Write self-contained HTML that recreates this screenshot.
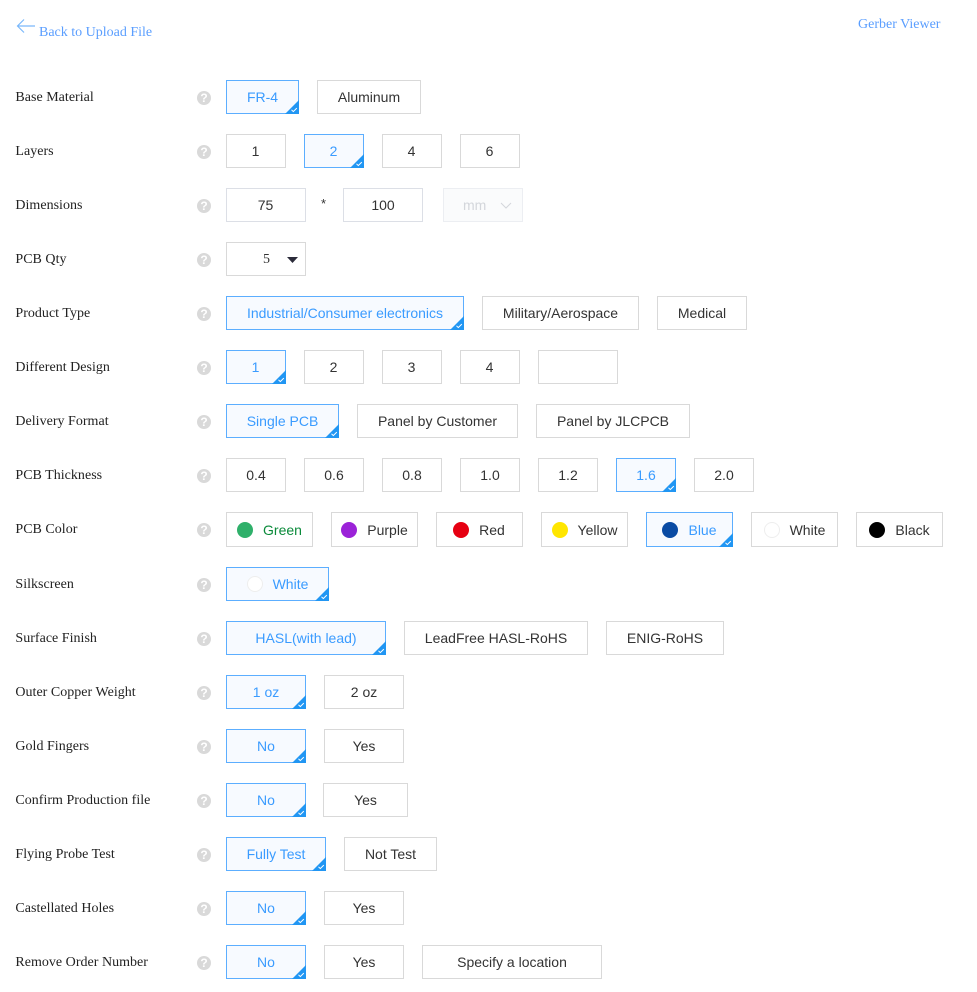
<!DOCTYPE html>
<html>
<head>
<meta charset="utf-8">
<style>
html,body{margin:0;padding:0;background:#fff;width:977px;height:992px;overflow:hidden}
body{position:relative;font-family:"Liberation Sans",sans-serif;font-size:14px;color:#333}
.r{position:absolute;left:0;width:977px;height:34px}
.l{position:absolute;left:15.4px;top:9px;font:14px/18px "Liberation Serif",serif;color:#222;white-space:nowrap;letter-spacing:.02px}
.q{position:absolute;left:197px;top:11px;width:14px;height:14px;border-radius:50%;background:#d9d9d9;color:#fff;font:bold 12px/14px "Liberation Sans",sans-serif;text-align:center}
.b{position:absolute;top:0;height:32px;border:1px solid #d9d9d9;box-sizing:content-box;line-height:33px;text-align:center;color:#333;background:#fff;white-space:nowrap}
.s{border-color:#5caeff;background:#f7faff;color:#3a9bff}
.s svg{position:absolute;right:-1px;bottom:-1px;width:14px;height:14px}
.n{text-indent:-1px}
.c .b{height:33px;line-height:35px}
.d{display:inline-block;width:16px;height:16px;border-radius:50%;vertical-align:-3px;margin-right:10px;box-sizing:border-box}
.a{position:absolute;font:14px/18px "Liberation Serif",serif;color:#5a9eff;white-space:nowrap}
</style>
</head>
<body>
<svg style="position:absolute;left:16px;top:18px" width="20" height="16" viewBox="0 0 20 16"><path d="M19 8H1.5M8 1.5L1.5 8 8 14.5" fill="none" stroke="#7ab8fb" stroke-width="1.2"/></svg>
<a class="a" style="left:39px;top:24px">Back to Upload File</a>
<a class="a" style="left:858px;top:16px">Gerber Viewer</a>

<div class="r" style="top:80px"><span class="l">Base Material</span><span class="q">?</span>
<div class="b s" style="left:226px;width:71px">FR-4<svg viewBox="0 0 14 14"><path d="M14 0V14H0Z" fill="#2196f3"/><path d="M6.5 9.8L8.3 11.6 11.8 8.1" fill="none" stroke="#fff"/></svg></div>
<div class="b" style="left:317px;width:102px">Aluminum</div></div>

<div class="r" style="top:134px"><span class="l">Layers</span><span class="q">?</span>
<div class="b n" style="left:226px;width:58px">1</div>
<div class="b s n" style="left:304px;width:58px">2<svg viewBox="0 0 14 14"><path d="M14 0V14H0Z" fill="#2196f3"/><path d="M6.5 9.8L8.3 11.6 11.8 8.1" fill="none" stroke="#fff"/></svg></div>
<div class="b n" style="left:382px;width:58px">4</div>
<div class="b n" style="left:460px;width:58px">6</div></div>

<div class="r" style="top:188px"><span class="l">Dimensions</span><span class="q">?</span>
<div class="b n" style="left:226px;width:78px;border-color:#dcdfe6">75</div>
<span style="position:absolute;left:321px;top:7px;line-height:18px;font-size:13px">*</span>
<div class="b" style="left:343px;width:78px;border-color:#dcdfe6">100</div>
<div class="b" style="left:443px;width:78px;border-color:#eceef2;background:#fafbfc;color:#d3d6db;text-align:left;text-indent:19px">mm<svg style="position:absolute;left:56px;top:13px" width="12" height="8" viewBox="0 0 12 8"><path d="M1 1L6 6 11 1" fill="none" stroke="#d3d6db"/></svg></div></div>

<div class="r" style="top:242px"><span class="l">PCB Qty</span><span class="q">?</span>
<div class="b" style="left:226px;width:78px;font-family:'Liberation Serif',serif;text-align:left;text-indent:36px">5<svg style="position:absolute;left:60px;top:14px" width="11" height="6" viewBox="0 0 11 6"><path d="M0 0H11L5.5 6Z" fill="#2b2b3a"/></svg></div></div>

<div class="r" style="top:296px"><span class="l">Product Type</span><span class="q">?</span>
<div class="b s" style="left:226px;width:236px">Industrial/Consumer electronics<svg viewBox="0 0 14 14"><path d="M14 0V14H0Z" fill="#2196f3"/><path d="M6.5 9.8L8.3 11.6 11.8 8.1" fill="none" stroke="#fff"/></svg></div>
<div class="b" style="left:482px;width:155px">Military/Aerospace</div>
<div class="b" style="left:657px;width:88px">Medical</div></div>

<div class="r" style="top:350px"><span class="l">Different Design</span><span class="q">?</span>
<div class="b s n" style="left:226px;width:58px">1<svg viewBox="0 0 14 14"><path d="M14 0V14H0Z" fill="#2196f3"/><path d="M6.5 9.8L8.3 11.6 11.8 8.1" fill="none" stroke="#fff"/></svg></div>
<div class="b n" style="left:304px;width:58px">2</div>
<div class="b n" style="left:382px;width:58px">3</div>
<div class="b n" style="left:460px;width:58px">4</div>
<div class="b" style="left:538px;width:78px"></div></div>

<div class="r" style="top:404px"><span class="l">Delivery Format</span><span class="q">?</span>
<div class="b s" style="left:226px;width:111px">Single PCB<svg viewBox="0 0 14 14"><path d="M14 0V14H0Z" fill="#2196f3"/><path d="M6.5 9.8L8.3 11.6 11.8 8.1" fill="none" stroke="#fff"/></svg></div>
<div class="b" style="left:357px;width:159px">Panel by Customer</div>
<div class="b" style="left:536px;width:152px">Panel by JLCPCB</div></div>

<div class="r" style="top:458px"><span class="l">PCB Thickness</span><span class="q">?</span>
<div class="b" style="left:226px;width:58px">0.4</div>
<div class="b" style="left:304px;width:58px">0.6</div>
<div class="b" style="left:382px;width:58px">0.8</div>
<div class="b" style="left:460px;width:58px">1.0</div>
<div class="b" style="left:538px;width:58px">1.2</div>
<div class="b s" style="left:616px;width:58px">1.6<svg viewBox="0 0 14 14"><path d="M14 0V14H0Z" fill="#2196f3"/><path d="M6.5 9.8L8.3 11.6 11.8 8.1" fill="none" stroke="#fff"/></svg></div>
<div class="b" style="left:694px;width:58px">2.0</div></div>

<div class="r c" style="top:512px"><span class="l">PCB Color</span><span class="q">?</span>
<div class="b" style="left:226px;width:85px;color:#0a8a3a"><i class="d" style="background:#2fb06a"></i>Green</div>
<div class="b" style="left:331px;width:85px"><i class="d" style="background:#9b22d8"></i>Purple</div>
<div class="b" style="left:436px;width:85px"><i class="d" style="background:#e60012;margin-left:-1px"></i>Red</div>
<div class="b" style="left:541px;width:85px"><i class="d" style="background:#ffe600"></i>Yellow</div>
<div class="b s" style="left:646px;width:85px"><i class="d" style="background:#0a4ba3"></i>Blue<svg viewBox="0 0 14 14"><path d="M14 0V14H0Z" fill="#2196f3"/><path d="M6.5 9.8L8.3 11.6 11.8 8.1" fill="none" stroke="#fff"/></svg></div>
<div class="b" style="left:751px;width:85px"><i class="d" style="background:#fff;border:1px solid #eee"></i>White</div>
<div class="b" style="left:856px;width:85px"><i class="d" style="background:#000"></i>Black</div></div>

<div class="r" style="top:567px"><span class="l">Silkscreen</span><span class="q">?</span>
<div class="b s" style="left:226px;width:101px"><i class="d" style="background:#fff;border:1px solid #eee"></i>White<svg viewBox="0 0 14 14"><path d="M14 0V14H0Z" fill="#2196f3"/><path d="M6.5 9.8L8.3 11.6 11.8 8.1" fill="none" stroke="#fff"/></svg></div></div>

<div class="r" style="top:621px"><span class="l">Surface Finish</span><span class="q">?</span>
<div class="b s" style="left:226px;width:158px">HASL(with lead)<svg viewBox="0 0 14 14"><path d="M14 0V14H0Z" fill="#2196f3"/><path d="M6.5 9.8L8.3 11.6 11.8 8.1" fill="none" stroke="#fff"/></svg></div>
<div class="b" style="left:404px;width:182px">LeadFree HASL-RoHS</div>
<div class="b" style="left:606px;width:116px">ENIG-RoHS</div></div>

<div class="r" style="top:675px"><span class="l">Outer Copper Weight</span><span class="q">?</span>
<div class="b s" style="left:226px;width:78px">1 oz<svg viewBox="0 0 14 14"><path d="M14 0V14H0Z" fill="#2196f3"/><path d="M6.5 9.8L8.3 11.6 11.8 8.1" fill="none" stroke="#fff"/></svg></div>
<div class="b" style="left:324px;width:78px">2 oz</div></div>

<div class="r" style="top:729px"><span class="l">Gold Fingers</span><span class="q">?</span>
<div class="b s" style="left:226px;width:78px">No<svg viewBox="0 0 14 14"><path d="M14 0V14H0Z" fill="#2196f3"/><path d="M6.5 9.8L8.3 11.6 11.8 8.1" fill="none" stroke="#fff"/></svg></div>
<div class="b" style="left:324px;width:78px">Yes</div></div>

<div class="r" style="top:783px"><span class="l">Confirm Production file</span><span class="q">?</span>
<div class="b s" style="left:226px;width:78px">No<svg viewBox="0 0 14 14"><path d="M14 0V14H0Z" fill="#2196f3"/><path d="M6.5 9.8L8.3 11.6 11.8 8.1" fill="none" stroke="#fff"/></svg></div>
<div class="b" style="left:323px;width:83px">Yes</div></div>

<div class="r" style="top:837px"><span class="l">Flying Probe Test</span><span class="q">?</span>
<div class="b s" style="left:226px;width:98px">Fully Test<svg viewBox="0 0 14 14"><path d="M14 0V14H0Z" fill="#2196f3"/><path d="M6.5 9.8L8.3 11.6 11.8 8.1" fill="none" stroke="#fff"/></svg></div>
<div class="b" style="left:344px;width:91px">Not Test</div></div>

<div class="r" style="top:891px"><span class="l">Castellated Holes</span><span class="q">?</span>
<div class="b s" style="left:226px;width:78px">No<svg viewBox="0 0 14 14"><path d="M14 0V14H0Z" fill="#2196f3"/><path d="M6.5 9.8L8.3 11.6 11.8 8.1" fill="none" stroke="#fff"/></svg></div>
<div class="b" style="left:324px;width:78px">Yes</div></div>

<div class="r" style="top:945px"><span class="l">Remove Order Number</span><span class="q">?</span>
<div class="b s" style="left:226px;width:78px">No<svg viewBox="0 0 14 14"><path d="M14 0V14H0Z" fill="#2196f3"/><path d="M6.5 9.8L8.3 11.6 11.8 8.1" fill="none" stroke="#fff"/></svg></div>
<div class="b" style="left:324px;width:78px">Yes</div>
<div class="b" style="left:422px;width:178px">Specify a location</div></div>
</body>
</html>
